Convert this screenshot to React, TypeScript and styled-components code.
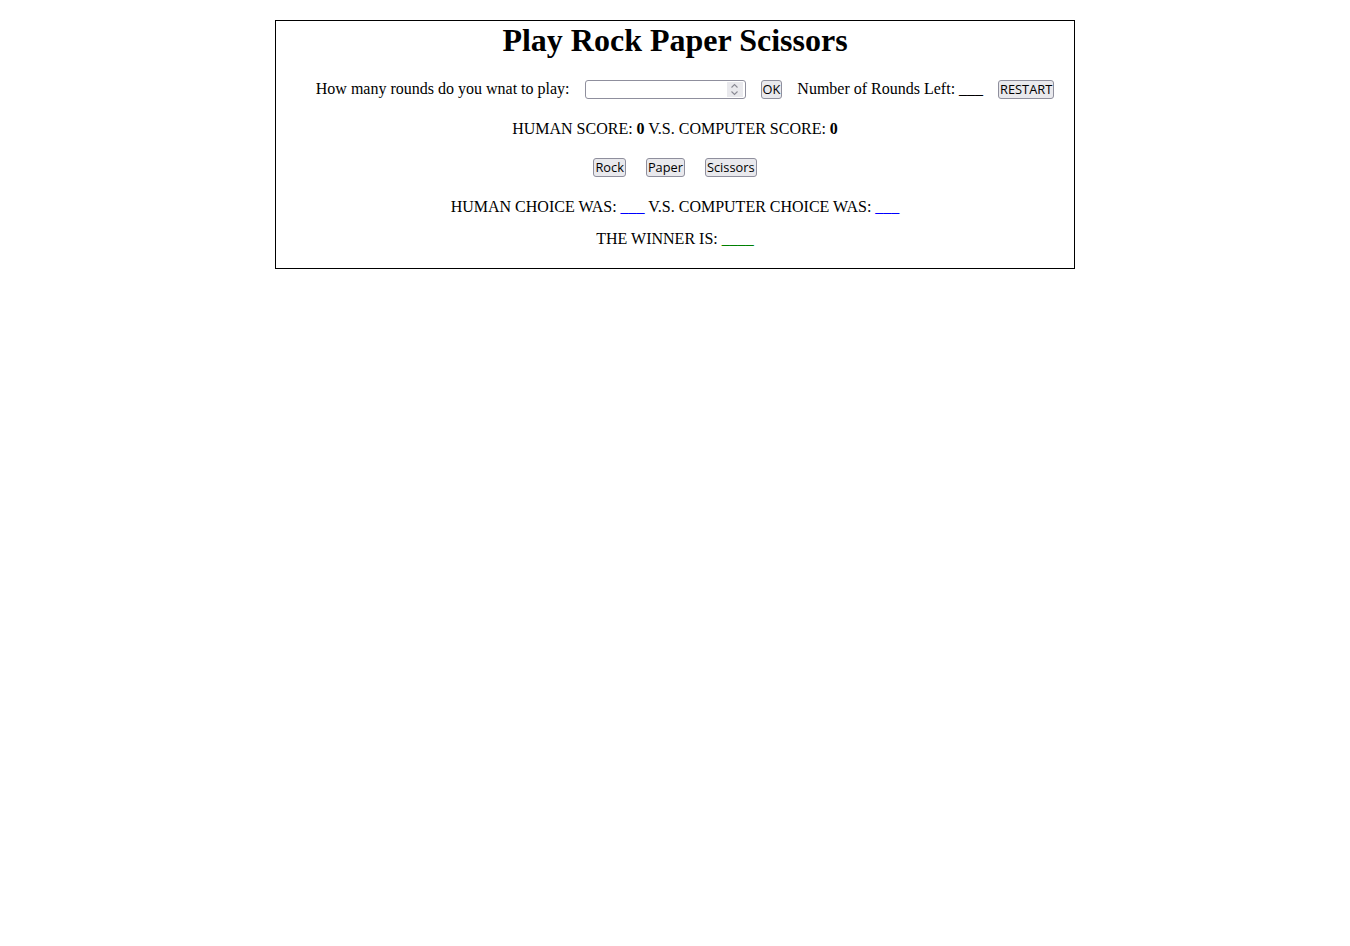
import React from "react";
import styled, { createGlobalStyle } from "styled-components";

const Global = createGlobalStyle`
  html, body { margin: 0; padding: 0; background: #fff; }
  body { font-family: "Liberation Serif", "Times New Roman", serif; font-size: 16px; color: #000; }
`;

const Board = styled.div`
  width: 798px;
  margin: 20px auto 0;
  border: 1px solid #000;
  padding: 0 0 20px;
  text-align: center;
`;

const Title = styled.h1`
  font-size: 32px;
  font-weight: bold;
  margin: 0;
  padding-top: 1px;
  line-height: 37px;
`;

const Controls = styled.div`
  display: flex;
  justify-content: center;
  align-items: center;
  gap: 15px;
  padding-left: 20px;
  margin-top: 20px;
  height: 20px;
`;

const Line = styled.div<{ $mt: number }>`
  margin-top: ${(p) => p.$mt}px;
  line-height: 18px;
  height: 18px;
`;

const InputWrap = styled.span`
  position: relative;
  display: inline-block;
  width: 161px;
  height: 19px;
`;

const NumInput = styled.input`
  width: 161px;
  height: 19px;
  box-sizing: border-box;
  border: 1px solid #8f8f9d;
  border-radius: 3px;
  padding: 0 22px 0 3px;
  font-size: 13px;
  margin: 0;
  background: #fff;
  -moz-appearance: textfield;
  &::-webkit-inner-spin-button,
  &::-webkit-outer-spin-button {
    -webkit-appearance: none;
    margin: 0;
  }
`;

const Spinner = styled.span`
  position: absolute;
  right: 3px;
  top: 2px;
  width: 16px;
  height: 15px;
  background: #e9e9ed;
  display: flex;
  flex-direction: column;
  align-items: center;
  justify-content: center;
  pointer-events: none;
`;

const Btn = styled.button`
  font-family: "Open Sans", "Noto Sans", sans-serif;
  font-size: 12.8px;
  color: #000;
  background: #e9e9ed;
  border: 1px solid #8f8f9d;
  border-radius: 3px;
  padding: 0 1px;
  height: 19px;
  line-height: 17px;
  margin: 0;
`;

const ButtonRow = styled.div`
  display: flex;
  justify-content: center;
  gap: 20px;
  margin-top: 20px;
  height: 19px;
`;

const Blank = styled.span<{ $color: string }>`
  color: ${(p) => p.$color};
`;

export default function App() {
  return (
    <>
      <Global />
      <Board>
        <Title>Play Rock Paper Scissors</Title>
        <Controls>
          <span>How many rounds do you wnat to play:</span>
          <InputWrap>
            <NumInput type="number" />
            <Spinner>
              <svg width="9" height="13" viewBox="0 0 9 13" fill="none" stroke="#8a8a94" strokeWidth="1.1">
                <path d="M1.5 4.5 L4.5 1.5 L7.5 4.5" />
                <path d="M1.5 8.5 L4.5 11.5 L7.5 8.5" />
              </svg>
            </Spinner>
          </InputWrap>
          <Btn>OK</Btn>
          <span>
            Number of Rounds Left: <Blank $color="#000">___</Blank>
          </span>
          <Btn>RESTART</Btn>
        </Controls>
        <Line $mt={21}>
          HUMAN SCORE: <b>0</b> V.S. COMPUTER SCORE: <b>0</b>
        </Line>
        <ButtonRow>
          <Btn>Rock</Btn>
          <Btn>Paper</Btn>
          <Btn>Scissors</Btn>
        </ButtonRow>
        <Line $mt={21}>
          HUMAN CHOICE WAS: <Blank $color="#0000ff">___</Blank> V.S. COMPUTER CHOICE WAS:{" "}
          <Blank $color="#0000ff">___</Blank>
        </Line>
        <Line $mt={14}>
          THE WINNER IS: <Blank $color="#008000">____</Blank>
        </Line>
      </Board>
    </>
  );
}
